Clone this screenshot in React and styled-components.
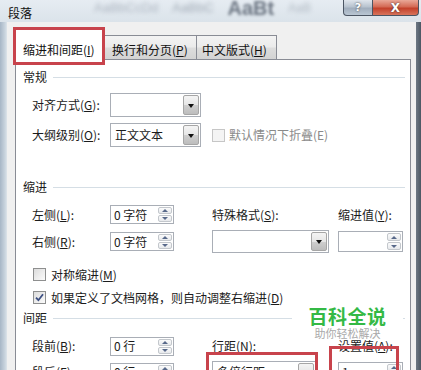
import React from "react";
import styled, { createGlobalStyle } from "styled-components";

const GlobalStyle = createGlobalStyle`
  html, body {
    margin: 0;
    padding: 0;
    overflow: hidden;
    background: #ffffff;
  }
  body {
    font-family: "Noto Sans CJK SC", "Microsoft YaHei", sans-serif;
    font-size: 12px;
    line-height: 16px;
    color: #1b1b1b;
  }
`;

const Window = styled.div`
  position: relative;
  width: 421px;
  height: 370px;
  overflow: hidden;
  display: flex;
  flex-direction: column;
  background: linear-gradient(
    90deg,
    #a7b6c6 0px,
    #c9d4de 5px,
    #dde4ea 7px,
    #dde4ea 415px,
    #6d7884 416px,
    #4c5763 421px
  );
`;

const TitleBar = styled.div`
  height: 22px;
  flex: none;
  display: flex;
  align-items: flex-start;
  background: linear-gradient(180deg, #e6ecf2 0%, #dbe3ea 100%);
`;

const Title = styled.span`
  margin: 5px 0 0 8px;
  font-size: 12px;
  color: #101010;
`;

const BlurGroup = styled.div`
  display: flex;
  align-items: center;
  gap: 14px;
  margin: 0 0 0 62px;
`;

const BlurWord = styled.span`
  font-family: "Liberation Sans", Arial, sans-serif;
  font-size: ${(p) => p.$size}px;
  font-weight: ${(p) => (p.$bold ? 700 : 400)};
  color: ${(p) => p.$color};
  filter: blur(${(p) => p.$blur}px);
  white-space: nowrap;
`;

const Caption = styled.div`
  margin-left: auto;
  margin-right: 2px;
  display: flex;
`;

const CaptionButton = styled.div`
  width: ${(p) => p.$width}px;
  height: 16px;
  display: flex;
  align-items: center;
  justify-content: center;
  border: 1px solid #4b5563;
  border-top: 0;
  box-sizing: border-box;
  color: #ffffff;
  font-family: "DejaVu Sans", sans-serif;
  font-weight: 700;
  font-size: ${(p) => (p.$close ? 12 : 11)}px;
  text-shadow: 0 0 2px #333;
  background: ${(p) =>
    p.$close
      ? "linear-gradient(180deg, #e9a898 0%, #d46a55 45%, #c3412b 55%, #d8745c 100%)"
      : "linear-gradient(180deg, #dfe5ec 0%, #b8c3cf 45%, #a1aebd 55%, #b9c6d3 100%)"};
  border-radius: ${(p) => (p.$close ? "0 0 4px 0" : "0 0 0 4px")};
  margin-left: ${(p) => (p.$close ? -1 : 0)}px;
`;

const Client = styled.div`
  flex: 1;
  min-height: 0;
  display: flex;
  flex-direction: column;
  margin: 0 5px 0 7px;
  padding: 6px 5px 0 8px;
  background: #f0f0f0;
`;

const TabRow = styled.div`
  position: relative;
  z-index: 1;
  height: 32px;
  flex: none;
  display: flex;
  align-items: flex-start;
  margin-bottom: -1px;
`;

const Tab = styled.div`
  box-sizing: border-box;
  width: ${(p) => p.$width}px;
  height: ${(p) => (p.$active ? 32 : 24)}px;
  margin-top: ${(p) => (p.$active ? 0 : 7)}px;
  margin-left: ${(p) => (p.$first ? 0 : -1)}px;
  padding-top: ${(p) => (p.$active ? 13 : 6)}px;
  padding-left: ${(p) => p.$pad}px;
  border: 1px solid #898c95;
  border-bottom: 0;
  background: ${(p) =>
    p.$active
      ? "#ffffff"
      : "linear-gradient(180deg, #f3f3f3 0%, #ebebeb 48%, #dddddd 52%, #d3d3d3 100%)"};
  white-space: nowrap;
  color: #111;
`;

const Panel = styled.div`
  flex: 1;
  display: flex;
  flex-direction: column;
  background: #ffffff;
  border: 1px solid #898c95;
  border-bottom: 0;
`;

const SectionHeader = styled.div`
  display: flex;
  align-items: center;
  gap: 6px;
  height: 16px;
  margin: ${(p) => p.$top}px 5px 0 7px;

  &::after {
    content: "";
    flex: 1;
    height: 1px;
    background: #d5dee5;
  }
`;

const FieldGrid = styled.div`
  display: grid;
  grid-template-columns: 78px 102px 126px 1fr;
  grid-auto-rows: ${(p) => p.$row}px;
  align-items: center;
  padding-left: 16px;
  margin-top: ${(p) => p.$top}px;
`;

const Label = styled.span`
  white-space: nowrap;
  color: ${(p) => (p.$disabled ? "#8a8a8a" : "#1b1b1b")};
`;

const SelectBox = styled.div`
  box-sizing: border-box;
  width: ${(p) => p.$width}px;
  height: ${(p) => p.$height}px;
  display: flex;
  align-items: stretch;
  border: 1px solid #a9aeb6;
  background: #ffffff;
  padding: 1px;
`;

const SelectText = styled.span`
  flex: 1;
  padding-left: 3px;
  display: flex;
  align-items: center;
  white-space: nowrap;
`;

const DropButton = styled.div`
  width: 16px;
  display: flex;
  align-items: center;
  justify-content: center;
  box-sizing: border-box;
  border: 1px solid #a6a6a6;
  border-radius: 2px;
  background: linear-gradient(180deg, #f4f4f4 0%, #e6e6e6 50%, #cfcfcf 51%, #bdbdbd 100%);
`;

const DownArrow = styled.span`
  width: 0;
  height: 0;
  border-left: 3.5px solid transparent;
  border-right: 3.5px solid transparent;
  border-top: 4px solid #111;
  margin-top: 1px;
`;

const SpinFrame = styled.div`
  box-sizing: border-box;
  width: ${(p) => p.$width}px;
  height: ${(p) => p.$height}px;
  display: flex;
  border: 1px solid #a9aeb6;
  background: #ffffff;
  padding: 1px;
`;

const SpinText = styled.span`
  flex: 1;
  padding-left: 2px;
  display: flex;
  align-items: center;
  white-space: nowrap;
`;

const SpinButtons = styled.div`
  width: 14px;
  display: flex;
  flex-direction: column;
  gap: 1px;
`;

const SpinHalf = styled.div`
  flex: 1;
  display: flex;
  align-items: center;
  justify-content: center;
  box-sizing: border-box;
  border: 1px solid #c3c7cc;
  border-radius: 2px;
  background: linear-gradient(180deg, #fbfbfb 0%, #e7e9ec 100%);
`;

const SpinArrow = styled.span`
  width: 0;
  height: 0;
  border-left: 3px solid transparent;
  border-right: 3px solid transparent;
  border-top: ${(p) => (p.$up ? "0" : "3px solid #58698a")};
  border-bottom: ${(p) => (p.$up ? "3px solid #58698a" : "0")};
`;

const CheckRow = styled.div`
  display: flex;
  align-items: center;
  gap: ${(p) => p.$gap}px;
  height: 23px;
  padding-left: ${(p) => p.$indent}px;
  margin-top: ${(p) => p.$top || 0}px;
  grid-column: ${(p) => p.$span || "auto"};
`;

const Box = styled.span`
  box-sizing: border-box;
  width: 13px;
  height: 13px;
  flex: none;
  display: flex;
  align-items: center;
  justify-content: center;
  border: 1px solid ${(p) => (p.$disabled ? "#c6c6c6" : "#8e8f8f")};
  background: ${(p) =>
    p.$disabled ? "#f4f4f4" : "linear-gradient(135deg, #dcdcdc 0%, #fbfbfb 100%)"};
`;

const Highlight = styled.div`
  position: absolute;
  left: ${(p) => p.$x}px;
  top: ${(p) => p.$y}px;
  width: ${(p) => p.$w}px;
  height: ${(p) => p.$h}px;
  box-sizing: border-box;
  border: 3px solid #c8434c;
  z-index: 5;
`;

const Watermark = styled.div`
  position: absolute;
  left: 292px;
  top: 305px;
  width: 111px;
  height: 34px;
  display: flex;
  flex-direction: column;
  align-items: center;
  background: #ffffff;
  z-index: 4;
`;

const MarkTitle = styled.span`
  font-size: 19px;
  line-height: 22px;
  font-weight: 700;
  letter-spacing: 0.5px;
  color: #34b945;
`;

const MarkSub = styled.span`
  font-size: 11px;
  line-height: 12px;
  color: #a9a9a9;
`;

const Select = ({ width, height = 24, children }) => (
  <SelectBox $width={width} $height={height}>
    <SelectText>{children}</SelectText>
    <DropButton>
      <DownArrow />
    </DropButton>
  </SelectBox>
);

const Spin = ({ width = 64, height = 19, children }) => (
  <SpinFrame $width={width} $height={height}>
    <SpinText>{children}</SpinText>
    <SpinButtons>
      <SpinHalf>
        <SpinArrow $up />
      </SpinHalf>
      <SpinHalf>
        <SpinArrow />
      </SpinHalf>
    </SpinButtons>
  </SpinFrame>
);

const Checkbox = ({ checked, disabled }) => (
  <Box $disabled={disabled}>
    {checked && (
      <svg width="9" height="9" viewBox="0 0 9 9">
        <path d="M1 4.6 L3.4 7.2 L8 1.2" fill="none" stroke="#3c4f82" strokeWidth="1.8" />
      </svg>
    )}
  </Box>
);

export default function App() {
  return (
    <Window>
      <GlobalStyle />
      <TitleBar>
        <Title>段落</Title>
        <BlurGroup>
          <BlurWord $size={13} $color="rgba(120,130,145,0.5)" $blur={2.2}>
            AaBbCcDd
          </BlurWord>
          <BlurWord $size={13} $color="rgba(110,120,135,0.55)" $blur={2.2}>
            AaBbC
          </BlurWord>
          <BlurWord $size={20} $bold $color="rgba(70,80,95,0.75)" $blur={1.8}>
            AaBt
          </BlurWord>
          <BlurWord $size={12} $color="rgba(120,130,145,0.45)" $blur={2.2}>
            AaB
          </BlurWord>
        </BlurGroup>
        <Caption>
          <CaptionButton $width={30}>?</CaptionButton>
          <CaptionButton $width={47} $close>
            X
          </CaptionButton>
        </Caption>
      </TitleBar>

      <Client>
        <TabRow>
          <Tab $first $active $width={90} $pad={7}>
            缩进和间距(<u>I</u>)
          </Tab>
          <Tab $width={93} $pad={7}>
            换行和分页(<u>P</u>)
          </Tab>
          <Tab $width={81} $pad={5}>
            中文版式(<u>H</u>)
          </Tab>
        </TabRow>

        <Panel>
          <SectionHeader $top={9}>常规</SectionHeader>
          <FieldGrid $row={30} $top={5}>
            <Label>
              对齐方式(<u>G</u>):
            </Label>
            <Select width={91} />
            <span />
            <span />
            <Label>
              大纲级别(<u>O</u>):
            </Label>
            <Select width={91}>正文文本</Select>
            <CheckRow $gap={4} $indent={0} $span="3 / span 2">
              <Checkbox disabled />
              <Label $disabled>默认情况下折叠(E)</Label>
            </CheckRow>
          </FieldGrid>

          <SectionHeader $top={29}>缩进</SectionHeader>
          <FieldGrid $row={27} $top={6}>
            <Label>
              左侧(<u>L</u>):
            </Label>
            <Spin>0 字符</Spin>
            <Label>
              特殊格式(<u>S</u>):
            </Label>
            <Label>
              缩进值(<u>Y</u>):
            </Label>
            <Label>
              右侧(<u>R</u>):
            </Label>
            <Spin>0 字符</Spin>
            <Select width={117} height={23} />
            <Spin width={65} height={21} />
          </FieldGrid>

          <CheckRow $gap={5} $indent={17} $top={8}>
            <Checkbox />
            <Label>
              对称缩进(<u>M</u>)
            </Label>
          </CheckRow>
          <CheckRow $gap={5} $indent={17}>
            <Checkbox checked />
            <Label>
              如果定义了文档网格，则自动调整右缩进(<u>D</u>)
            </Label>
          </CheckRow>

          <SectionHeader $top={1}>间距</SectionHeader>
          <FieldGrid $row={26} $top={7}>
            <Label>
              段前(<u>B</u>):
            </Label>
            <Spin>0 行</Spin>
            <Label>
              行距(<u>N</u>):
            </Label>
            <Label>
              设置值(<u>A</u>):
            </Label>
            <Label>
              段后(<u>F</u>):
            </Label>
            <Spin>0 行</Spin>
            <Select width={104} height={23}>
              多倍行距
            </Select>
            <Spin width={65} height={20}>
              1
            </Spin>
          </FieldGrid>
        </Panel>
      </Client>

      <Watermark>
        <MarkTitle>百科全说</MarkTitle>
        <MarkSub>助你轻松解决</MarkSub>
      </Watermark>

      <Highlight $x={13} $y={27} $w={92} $h={38} />
      <Highlight $x={206} $y={352} $w={112} $h={40} />
      <Highlight $x={329} $y={346} $w={70} $h={40} />
    </Window>
  );
}
